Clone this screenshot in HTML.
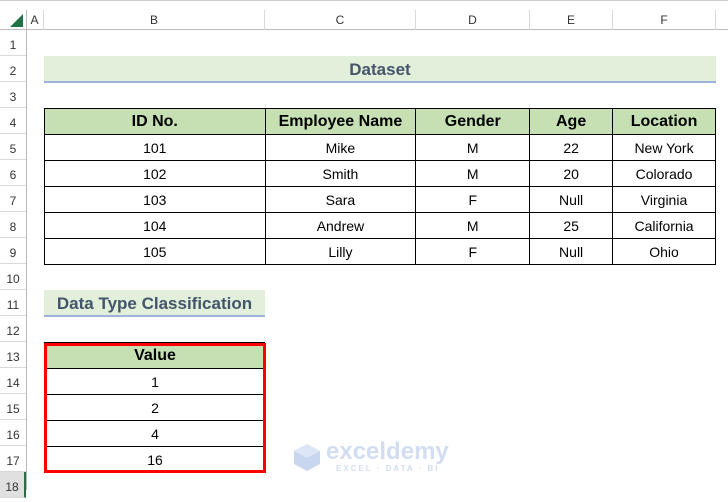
<!DOCTYPE html>
<html><head><style>
body{margin:0;width:728px;height:490px;background:#fff;position:relative;overflow:hidden;font-family:"Liberation Sans",Calibri,sans-serif}
.a{position:absolute}
.ch{position:absolute;top:10px;height:20px;font-size:12px;color:#333;text-align:center;line-height:20px;border-right:1px solid #d9d9d9;box-sizing:border-box}
.rh{position:absolute;left:0;width:26px;height:26px;font-size:12px;color:#333;text-align:center;line-height:30px;border-bottom:1px solid #d9d9d9;box-sizing:border-box}
table{position:absolute;border-collapse:collapse;font-size:14px}
td{border:1px solid #000;text-align:center;height:26px;padding:0;box-sizing:border-box}
th{border:1px solid #000;background:#c6e0b4;font-size:16px;height:26px;padding:0;box-sizing:border-box}
</style></head><body>
<div class="a" style="left:0;top:0;width:728px;height:1px;background:#ccc"></div>
<div class="a" style="left:0;top:29px;width:728px;height:1px;background:#bbb"></div>
<div class="a" style="left:26px;top:10px;width:1px;height:480px;background:#bbb"></div>
<svg class="a" style="left:10px;top:14px" width="13" height="13"><polygon points="13,0 13,13 0,13" fill="#217346"/></svg>
<div class="ch" style="left:26px;width:18px">A</div>
<div class="ch" style="left:44px;width:221px">B</div>
<div class="ch" style="left:265px;width:151px">C</div>
<div class="ch" style="left:416px;width:114px">D</div>
<div class="ch" style="left:530px;width:83px">E</div>
<div class="ch" style="left:613px;width:103px">F</div>
<div class="rh" style="top:30px">1</div><div class="rh" style="top:56px">2</div><div class="rh" style="top:82px">3</div><div class="rh" style="top:108px">4</div><div class="rh" style="top:134px">5</div><div class="rh" style="top:160px">6</div><div class="rh" style="top:186px">7</div><div class="rh" style="top:212px">8</div><div class="rh" style="top:238px">9</div><div class="rh" style="top:264px">10</div><div class="rh" style="top:290px">11</div><div class="rh" style="top:316px">12</div><div class="rh" style="top:342px">13</div><div class="rh" style="top:368px">14</div><div class="rh" style="top:394px">15</div><div class="rh" style="top:420px">16</div><div class="rh" style="top:446px">17</div>
<div class="rh" style="top:472px;background:#e0e0e0;border-right:2px solid #217346">18</div>
<div class="a" style="left:44px;top:56px;width:672px;height:25px;background:#e2efda;border-bottom:2px solid #9eb3dc;text-align:center;font-weight:bold;font-size:17px;line-height:28px;color:#44546a">Dataset</div>
<table style="left:44px;top:108px;width:672px">
<colgroup><col style="width:221px"><col style="width:151px"><col style="width:114px"><col style="width:83px"><col style="width:103px"></colgroup>
<tr><th>ID No.</th><th>Employee Name</th><th>Gender</th><th>Age</th><th>Location</th></tr>
<tr><td>101</td><td>Mike</td><td>M</td><td>22</td><td>New York</td></tr>
<tr><td>102</td><td>Smith</td><td>M</td><td>20</td><td>Colorado</td></tr>
<tr><td>103</td><td>Sara</td><td>F</td><td>Null</td><td>Virginia</td></tr>
<tr><td>104</td><td>Andrew</td><td>M</td><td>25</td><td>California</td></tr>
<tr><td>105</td><td>Lilly</td><td>F</td><td>Null</td><td>Ohio</td></tr>
</table>
<div class="a" style="left:44px;top:290px;width:221px;height:25px;background:#e2efda;border-bottom:2px solid #9eb3dc;text-align:center;font-weight:bold;font-size:17px;line-height:28px;color:#44546a">Data Type Classification</div>
<div class="a" style="left:44px;top:342px;width:221px;height:1px;background:#000"></div>
<table style="left:44px;top:343px;width:222px;outline:3px solid #f00;outline-offset:-3px">
<tr><th style="height:25px">Value</th></tr>
<tr><td>1</td></tr><tr><td>2</td></tr><tr><td>4</td></tr><tr><td>16</td></tr>
</table>
<svg class="a" style="left:292px;top:442px" width="30" height="30"><polygon points="15,2 28,9 28,22 15,29 2,22 2,9" fill="#c9d6ef"/><polygon points="15,2 28,9 15,16 2,9" fill="#dde6f6"/></svg>
<div class="a" style="left:326px;top:438px;font-size:24px;font-weight:bold;color:#d3ddf2">exceldemy</div>
<div class="a" style="left:336px;top:464px;font-size:8px;letter-spacing:2px;color:#d3ddf2;font-weight:bold">EXCEL · DATA · BI</div>
</body></html>
